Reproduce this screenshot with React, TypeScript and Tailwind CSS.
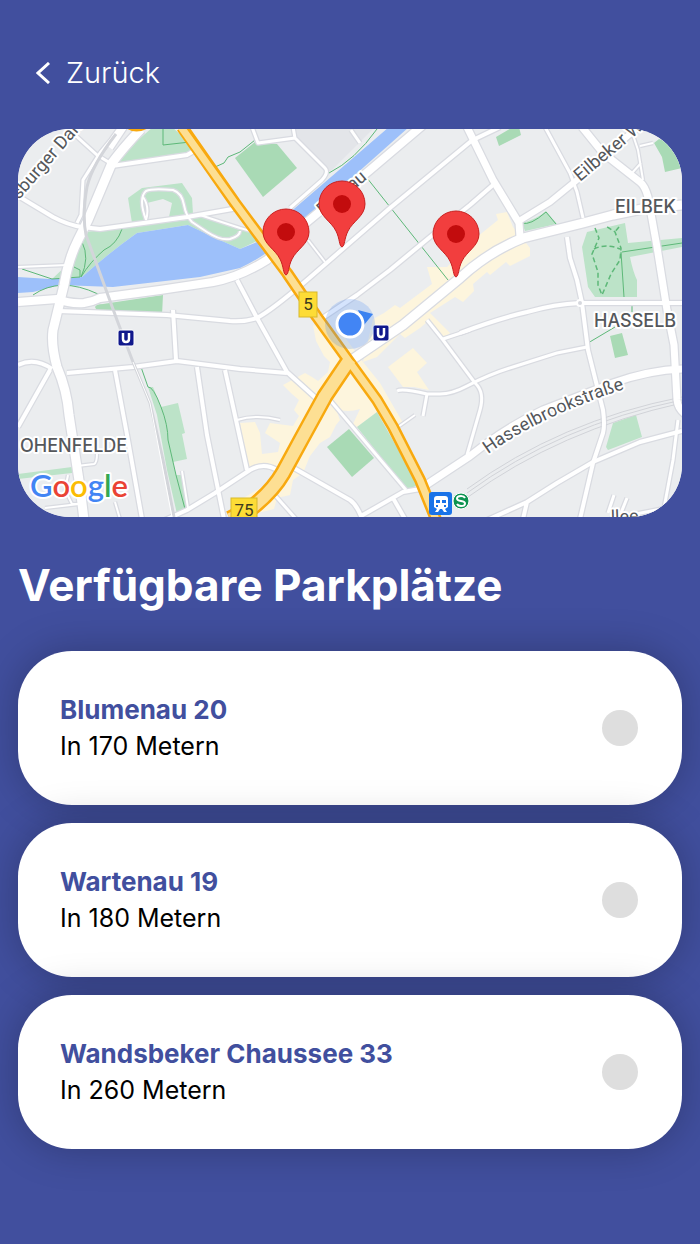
import { useState } from "react";

interface ParkingSpot {
  id: string;
  name: string;
  distance: number;
}

interface Road {
  d: string;
  w: number;
}

const spots: ParkingSpot[] = [
  { id: "blumenau-20", name: "Blumenau 20", distance: 170 },
  { id: "wartenau-19", name: "Wartenau 19", distance: 180 },
  { id: "wandsbeker-33", name: "Wandsbeker Chaussee 33", distance: 260 },
];

const pins = [
  { x: 342, y: 247 },
  { x: 286, y: 275 },
  { x: 456, y: 277 },
];

const parks = [
  "M153 127 L172 127 L190 143 L192 152 L115 166 L130 147 Z",
  "M128 198 L142 188 L182 183 L192 198 L193 214 L132 223 Z",
  "M85 232 L187 220 L200 215 L240 230 L262 233 L257 241 L240 249 L213 237 L188 225 L137 233 Q110 252 82 277 L52 279 L68 264 Z",
  "M522 223 Q537 219 546 211 L557 224 L525 231 Z",
  "M587 232 L625 223 L628 243 L682 238 L682 247 L630 257 Q633 272 637 280 L637 297 L595 297 L588 287 L582 247 Z",
  "M613 423 L636 415 L642 437 L608 450 L606 447 Z",
  "M148 387 L153 387 L161 407 L178 403 L185 433 L182 434 L187 459 L173 462 L176 475 L181 475 L189 508 L177 514 L167 470 L157 415 Z",
  "M18 474 L72 467 L72 473 L18 479 Z",
  "M357 427 L377 412 L418 485 L407 490 Z",
];

const darkParks = [
  "M95 307 Q96 304 103 304 L163 295 L162 315 L97 311 Z",
  "M235 158 L255 142 L277 144 L297 168 L263 197 Z",
  "M496 137 L513 127 L519 127 L521 135 L499 146 Z",
  "M654 143 L659 139 L690 150 L682 168 L665 172 L662 157 Z",
  "M610 336 L622 333 L628 355 L615 358 Z",
  "M327 447 L349 429 L374 458 L352 477 Z",
];

const shops = [
  "M313 325 L316 341 L324 356 L330 362 L328 372 L318 381 L312 377 L305 373 L283 385 L292 394 L299 400 L294 410 L299 416 L293 426 L270 423 L265 433 L280 443 L278 452 L262 454 L260 433 L255 422 L240 423 L248 467 L267 463 L277 470 L262 487 L240 500 L228 520 L262 512 L274 509 L277 498 L290 495 L293 480 L303 473 L310 456 L320 443 L330 437 L336 425 L340 420 L336 409 Q348 413 360 409 L353 424 L357 427 L377 412 L393 427 L403 423 L380 383 L363 362 L344 336 Z",
  "M388 367 L413 348 L427 363 L417 372 L429 390 L414 387 L403 387 Z",
  "M373 319 L384 313 L395 305 L400 308 L420 293 L432 284 L427 267 L447 267 L477 237 L498 220 L496 214 L507 212 L513 227 L530 248 L530 256 L510 266 L506 262 L490 275 L487 272 L473 284 L474 291 L463 302 L455 297 L430 313 L450 333 L443 340 L427 322 L420 328 L405 338 L400 334 L377 357 L363 362 Z",
];

const roads: Road[] = [
  { d: "M120 127 L110 141 L100 153 L83 180 L81 215 L77 223", w: 3 },
  { d: "M18 196 L53 217 Q68 225 82 227 L100 229 L187 217 L238 208", w: 4 },
  { d: "M75 135 L97 155 L110 163", w: 3 },
  { d: "M112 166 L187 155 L196 150", w: 4 },
  { d: "M18 267 L68 265", w: 2 },
  { d: "M58 311 L87 312 L167 315 L230 321 Q245 322 257 318 Q272 310 307 280 L390 208 L470 142 L477 138 L500 127", w: 4 },
  { d: "M318 321 L357 295 L390 270 L430 237 L470 205 L493 185", w: 4 },
  { d: "M545 127 L570 173 L577 192 L583 218", w: 3 },
  { d: "M567 237 L570 258 L577 280 L582 303 L588 350 L603 410 Q605 425 603 433 L593 463 L580 519", w: 4 },
  { d: "M633 135 L638 150 L643 180 M640 146 L653 143 M632 173 L641 163", w: 2 },
  { d: "M460 333 Q500 318 527 312 Q555 304 580 303 L682 303", w: 4 },
  { d: "M397 391 Q402 388 427 394 L440 394 Q452 394 467 386 Q490 374 513 367 L557 353 L587 347 M427 394 L423 416", w: 3 },
  { d: "M427 320 L443 340 L475 383 Q485 392 480 410 L467 455 M443 339 L470 330", w: 3 },
  { d: "M485 521 L527 502 L557 483 L593 462 L640 442 L682 431 M527 502 L523 519", w: 4 },
  { d: "M678 420 L673 460 L662 519", w: 3 },
  { d: "M18 365 Q35 357 52 369 M50 370 L18 427", w: 4 },
  { d: "M67 373 L133 367 L177 361 L240 369 L287 373", w: 4 },
  { d: "M173 310 L176 360 M115 370 L128 440 L142 519 M197 367 L207 435 L224 519 M225 370 L247 470", w: 4 },
  { d: "M165 520 L187 510 L215 493 L250 470 Q264 462 277 470", w: 4 },
  { d: "M237 280 L257 318 L287 372 L318 400", w: 4 },
  { d: "M330 400 L406 490", w: 3 },
  { d: "M292 467 L350 500 Q356 504 361 516 L403 492 L420 489 M393 498 L405 519", w: 4 },
  { d: "M273 493 L296 519", w: 3 },
  { d: "M237 420 Q257 414 280 420 M398 427 L415 415", w: 2 },
  { d: "M77 466 L94 464 Q97 463 97 453 M115 502 L120 519 M68 475 L65 490 L72 504 L79 504 M45 508 L79 504 M182 471 L188 508", w: 2 },
  { d: "M252 127 L258 143 L295 138 L325 168 Q329 172 322 180 L290 208 M293 127 L295 138 M351 130 L360 143", w: 3 },
  { d: "M146 220 Q138 198 146 191 Q152 188 173 190 Q182 193 184 205 Q186 216 192 222 L207 232 Q221 241 230 239 Q240 236 240 231 M143 197 Q150 207 146 220 M200 215 L240 228 L258 233", w: 2 },
  { d: "M308 240 L325 262", w: 2 },
  { d: "M610 519 L682 505 M614 495 L608 513 M627 498 L621 513", w: 3 },
  { d: "M467 127 L493 180 L519 223 L520 237", w: 7 },
  { d: "M519 221 L550 202 L577 180 L638 127", w: 6 },
  { d: "M582 127 L603 153 L640 182 Q645 186 648 197 L657 247 L667 310 L674 345 L677 400 Q678 410 688 416", w: 7 },
  { d: "M420 489 L470 456 L487 443 Q515 423 543 410 L613 383 Q650 370 682 369", w: 7 },
  { d: "M18 302 L57 299 Q70 304 84 303 Q92 302 100 298 L160 290 L213 282 Q240 277 267 260 L307 222 L370 170 L423 125", w: 8 },
  { d: "M141 129 Q123 148 112 163 L88 220 L78 240 Q68 260 64 285 L53 330 Q51 345 57 367 Q67 390 69 415 L80 487 L84 520", w: 9 },
  { d: "M124 127 L110 148", w: 6 },
  { d: "M350 361 L403 325 L460 278 Q488 252 523 238 L583 223 L613 215 L647 208 L682 205", w: 9 },
];

const paths = [
  "M163 129 L163 145 L190 142",
  "M122 229 Q117 244 104 250 Q90 262 81 277 Q90 258 82 242",
  "M22 269 L52 279 L80 277 L80 270 L74 267",
  "M33 295 Q60 276 98 294",
  "M367 178 L448 280",
  "M377 129 Q355 160 329 173",
  "M215 167 L224 163 L228 157 L240 152 L255 140",
  "M141 367 L148 387 Q153 386 161 407 Q168 425 168 440 L176 475 L185 509 L188 509",
  "M522 223 Q530 226 546 212 L556 224",
  "M621 252 L624 297 M622 252 L682 243 M632 302 L632 312 M588 343 L615 327",
];

const halo = { stroke: "#fff", strokeWidth: 4, strokeLinejoin: "round", paintOrder: "stroke" } as const;

function Pin({ x, y }: { x: number; y: number }) {
  return (
    <g transform={`translate(${x} ${y})`}>
      <path
        d="M0 0 C-3 -1 -2 -8 -6 -16 C-11 -26 -23 -31 -23 -43 A23 23 0 0 1 23 -43 C23 -31 11 -26 6 -16 C2 -8 3 -1 0 0 Z"
        fill="#f23e3e"
        stroke="#c8201f"
      />
      <circle cy="-43" r="9" fill="#c20c0d" />
    </g>
  );
}

function SubwaySign({ x, y }: { x: number; y: number }) {
  return (
    <g transform={`translate(${x} ${y})`}>
      <rect x="-8" y="-8" width="16" height="16" rx="2" fill="#10188c" stroke="#fff" />
      <path d="M-3 -5 V1 Q-3 4 0 4 Q3 4 3 1 V-5" fill="none" stroke="#fff" strokeWidth="2.5" />
    </g>
  );
}

function ParkingMap() {
  return (
    <svg
      viewBox="18 129 664 388"
      className="block w-full rounded-[52px] bg-[#ebedef] font-[Roboto,sans-serif]"
      role="img"
      aria-label="Karte"
    >
      <rect x="18" y="129" width="664" height="388" fill="#ebedef" />
      <path d="M293 127 L375 127 L330 172 L296 139 Z" fill="#e3e5e9" />
      {shops.map((d) => (
        <path key={d} d={d} fill="#fdf5dd" />
      ))}
      {parks.map((d) => (
        <path key={d} d={d} fill="#bce3c8" />
      ))}
      <path d="M147 203 L163 199 L172 203 L169 217 L147 220 Z" fill="#ebedef" />
      {darkParks.map((d) => (
        <path key={d} d={d} fill="#a9dab5" />
      ))}
      <path
        d="M18 277 L50 279 L82 277 Q110 252 137 233 L188 225 L213 237 L240 249 L257 242 L295 208 L389 127 L409 127 L310 215 Q275 252 240 268 L200 277 L113 287 L60 285 L33 292 L18 293 Z"
        fill="#9dc0fa"
      />

      <g fill="none" stroke="#5db878" strokeWidth="1">
        {paths.map((d) => (
          <path key={d} d={d} />
        ))}
        <path
          d="M595 228 L599 238 L592 254 L598 272 L598 285 L602 295 L611 274 L620 260 L621 248 L615 232 L606 226 M594 249 Q606 243 620 249 M619 227 L614 233"
          strokeWidth="1.5"
          strokeDasharray="5 3"
        />
      </g>

      <g fill="none" strokeLinejoin="round">
        {roads.map(({ d, w }) => (
          <path key={d} d={d} stroke="#d9dbe1" strokeWidth={w + 2.5} />
        ))}
        <path
          d="M467 493 Q560 425 682 400 M468 497 Q560 430 682 403 M467 489 Q560 421 682 397"
          stroke="#d1d3d8"
          strokeWidth="1"
        />
        {roads.map(({ d, w }) => (
          <path key={d} d={d} stroke="#fff" strokeWidth={w} />
        ))}
        <path
          d="M116 134 Q92 165 87 187 Q82 215 86 235 L117 320 L133 362 L150 403 L163 460 L174 517"
          stroke="#d3d5da"
          strokeWidth="3"
        />
        <path d="M133 362 L150 403 L161 460 L172 517" stroke="#fff" strokeWidth="1" />
        <g stroke="#f8a90f">
          <path d="M182 127 L235 203 L287 273 L317 317 L348 360 L377 400 L393 427 L420 480 L437 522" strokeWidth="12" />
          <path d="M348 362 L325 396 L302 438 L283 473 Q272 492 250 509 L230 519" strokeWidth="17" />
          <path d="M128 127 Q136 132 146 127" strokeWidth="4" />
        </g>
        <g stroke="#fddf93">
          <path d="M176 120 L235 203 L287 273 L317 317 L348 360 L377 400 L393 427 L420 480 L437 522" strokeWidth="7" />
          <path d="M350 359 L325 396 L302 438 L283 473 Q272 492 250 509 L230 519" strokeWidth="12" />
        </g>
      </g>
      <circle cx="580" cy="303" r="3" fill="#d6d8de" stroke="#fff" strokeWidth="2" />

      <g fill="#54575b" fontSize="18">
        <text transform="translate(19 200) rotate(-49)" {...halo}>
          sburger Damm
        </text>
        <text transform="translate(580 182) rotate(-40)" {...halo}>
          Eilbeker Weg
        </text>
        <text transform="translate(323 216) rotate(-40)" {...halo}>
          Eilenau
        </text>
        <path id="hasselbrook" d="M488 454 Q545 413 640 384" fill="none" />
        <text {...halo}>
          <textPath href="#hasselbrook">Hasselbrookstraße</textPath>
        </text>
        <text x="611" y="523" transform="rotate(-2 611 523)" {...halo}>
          llee
        </text>
      </g>
      <g className="font-[Inter,sans-serif]" fill="#54575b" fontSize="18" fontWeight="500" {...halo}>
        <text x="615" y="213">EILBEK</text>
        <text x="594" y="327">HASSELB</text>
        <text x="20" y="452">OHENFELDE</text>
      </g>

      <rect x="299" y="292" width="18" height="25" fill="#fddc36" stroke="#d8b92c" strokeWidth="1" />
      <text x="308" y="310" textAnchor="middle" fontSize="17" fill="#3c3a1e">
        5
      </text>
      <rect x="231" y="498" width="26" height="24" fill="#fddc36" stroke="#d8b92c" strokeWidth="1" />
      <text x="244" y="516" textAnchor="middle" fontSize="17" fill="#3c3a1e">
        75
      </text>

      <SubwaySign x={126} y={338} />
      <SubwaySign x={381} y={333} />

      <rect x="429" y="492" width="23" height="23" rx="3" fill="#1a73e8" />
      <path
        d="M437 496 H445 Q448 496 448 499 V507 L445 509 L447 512 H444 L442 509 H440 L438 512 H435 L437 509 L434 507 V499 Q434 496 437 496 Z"
        fill="#fff"
      />
      <path d="M436 500 H440 V503 H436 Z M442 500 H446 V503 H442 Z M436 505 H438 V507 H436 Z M444 505 H446 V507 H444 Z" fill="#1a73e8" />
      <circle cx="461" cy="501" r="8" fill="#0c9350" stroke="#fff" />
      <path
        d="M465 498 Q464 496 461 496 Q457 496 457 498.5 Q457 500.5 461 501 Q465 501.5 465 503.5 Q465 506 461 506 Q458 506 457 504"
        fill="none"
        stroke="#fff"
        strokeWidth="2"
      />

      <circle cx="350" cy="324" r="25" fill="#4285f4" fillOpacity="0.22" />
      <path d="M358 310 L373 314 L364 325 Z" fill="#3b82f0" />
      <circle cx="350" cy="324" r="13" fill="#4285f4" stroke="#fff" strokeWidth="3" />

      {pins.map((pin) => (
        <Pin key={pin.x} x={pin.x} y={pin.y} />
      ))}

      <text x="30" y="497" className="font-[Lato,sans-serif]" fontSize="31" fontWeight="600" {...halo}>
        <tspan fill="#4285f4">G</tspan>
        <tspan fill="#ea4335">o</tspan>
        <tspan fill="#fbbc04">o</tspan>
        <tspan fill="#4285f4">g</tspan>
        <tspan fill="#34a853">l</tspan>
        <tspan fill="#ea4335">e</tspan>
      </text>
    </svg>
  );
}

export default function App() {
  const [selected, setSelected] = useState<string | null>(null);

  return (
    <main className="min-h-screen bg-[#414f9e] px-[18px] pb-20 pt-[45px] font-[Inter,sans-serif]">
      <button type="button" className="mb-7 flex h-14 items-center gap-4 pl-[18px] text-[29px] font-light text-white">
        <svg width="14" height="22" viewBox="0 0 14 22" fill="none" aria-hidden="true">
          <path d="M13 1 L2 11 L13 21" stroke="currentColor" strokeWidth="3" />
        </svg>
        Zurück
      </button>

      <ParkingMap />

      <h1 className="mt-10 text-[44px] font-bold leading-[56px] text-white">Verfügbare Parkplätze</h1>

      <div className="mt-[38px] flex flex-col gap-[18px]">
        {spots.map((spot) => (
          <label
            key={spot.id}
            htmlFor={spot.id}
            className="flex min-h-[154px] cursor-pointer items-center justify-between rounded-[54px] bg-white pl-[42px] pr-11 shadow-[0_0_40px_rgba(0,0,0,0.25)]"
          >
            <span className="flex flex-col leading-9">
              <span className="text-[26px] font-bold leading-9 text-[#414f9e]">{spot.name}</span>
              <span className="text-[25px] leading-9 text-black">In {spot.distance} Metern</span>
            </span>
            <input
              id={spot.id}
              type="radio"
              name="spot"
              checked={selected === spot.id}
              onChange={() => setSelected(spot.id)}
              className="size-9 shrink-0 appearance-none rounded-full bg-[#dedede] checked:bg-[#414f9e]"
            />
          </label>
        ))}
      </div>
    </main>
  );
}
